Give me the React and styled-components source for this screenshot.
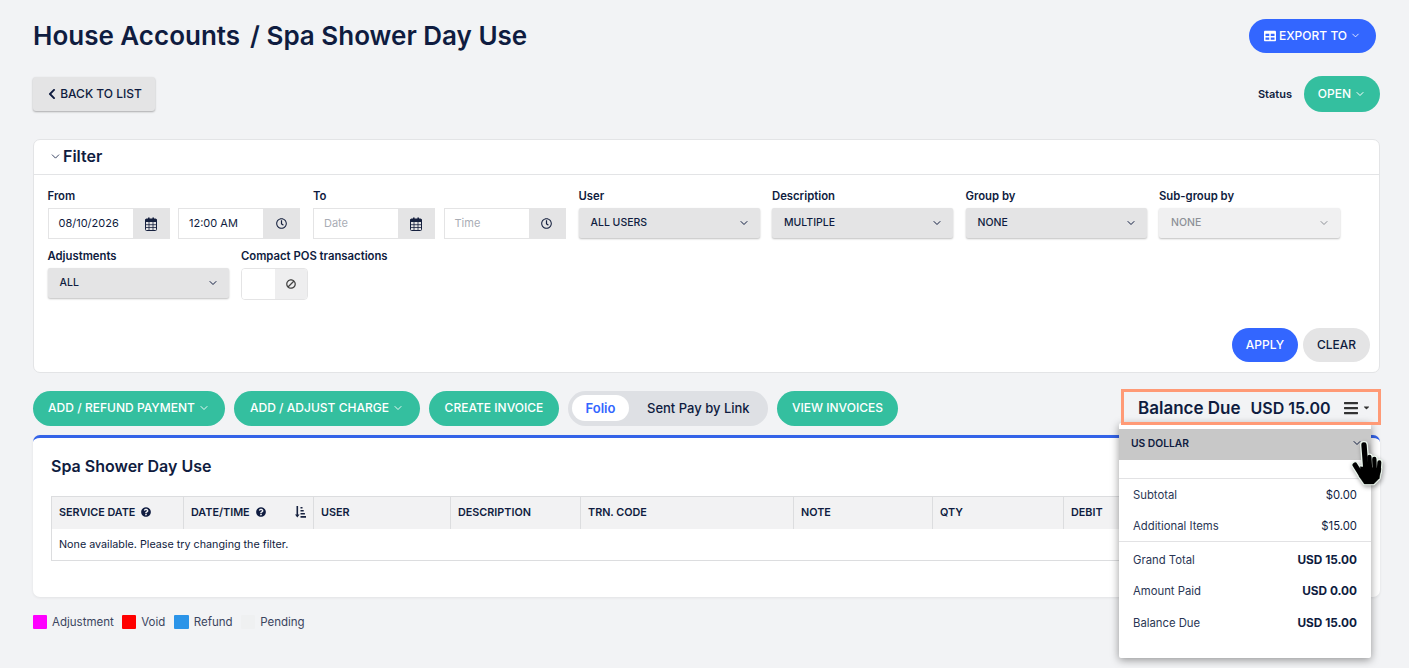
import styled, { createGlobalStyle } from "styled-components";
import { ChevronDown } from "lucide-react";
import {
  FaBan,
  FaBars,
  FaCaretDown,
  FaChevronLeft,
  FaQuestionCircle,
  FaRegClock,
  FaTable,
} from "react-icons/fa";

const navy = "#0f1c40";
const green = "#34bf9f";
const blue = "#3366ff";

const GlobalStyle = createGlobalStyle`
  html, body {
    margin: 0;
    height: 100%;
    background: #f2f3f5;
    overflow: hidden;
  }
  * { box-sizing: border-box; }
  body {
    font-family: "Inter", "Noto Sans", sans-serif;
    color: ${navy};
  }
`;

const Page = styled.div`
  height: 668px;
  padding: 19px 29px 0 33px;
  position: relative;
`;

const HeaderRow = styled.div`
  display: flex;
  justify-content: space-between;
  align-items: center;
  padding-right: 4px;
  height: 34px;
`;

const Title = styled.h1`
  margin: -2px 0 0;
  font-size: 26px;
  font-weight: 600;
  display: flex;
  gap: 10px;
`;

const Pill = styled.button`
  display: inline-flex;
  align-items: center;
  justify-content: center;
  gap: ${(p) => p.$gap ?? 3}px;
  height: ${(p) => p.$height ?? 35}px;
  width: ${(p) => (p.$width ? `${p.$width}px` : "auto")};
  padding: 0 0 ${(p) => p.$lift ?? 1}px;
  border: none;
  border-radius: 18px;
  background: ${(p) => p.$bg ?? green};
  color: ${(p) => p.$color ?? "#fff"};
  font: 500 12px "Inter", sans-serif;
  letter-spacing: 0.02px;
  flex-shrink: 0;
`;

const BackRow = styled.div`
  display: flex;
  justify-content: space-between;
  align-items: center;
  margin-top: 23px;
  height: 36px;
`;

const BackButton = styled.button`
  display: inline-flex;
  align-items: center;
  justify-content: center;
  gap: 2px;
  width: 122px;
  height: 34px;
  padding: 0 0 1px;
  border: none;
  border-radius: 3px;
  background: #e4e4e5;
  box-shadow: 0 1px 2px rgba(0, 0, 0, 0.3);
  color: ${navy};
  font: 500 12px "Inter", sans-serif;
`;

const StatusGroup = styled.div`
  display: flex;
  align-items: center;
  gap: 12px;
`;

const StatusLabel = styled.span`
  font-size: 11px;
  font-weight: 600;
`;

const FilterCard = styled.section`
  margin-top: 27px;
  height: 234px;
  background: #fff;
  border: 1px solid #e3e4e6;
  border-radius: 7px;
  display: flex;
  flex-direction: column;
`;

const FilterHead = styled.div`
  height: 35px;
  flex-shrink: 0;
  border-bottom: 1px solid #e3e4e6;
  display: flex;
  align-items: center;
  gap: 1px;
  padding: 0 0 2px 15px;
  font-size: 16px;
  font-weight: 600;
`;

const FilterBody = styled.div`
  flex: 1;
  padding: 14px 9px 10px 13.5px;
  display: flex;
  flex-direction: column;
`;

const FieldRow = styled.div`
  display: flex;
  height: 60px;
`;

const Field = styled.div`
  width: ${(p) => p.$width}px;
  flex-shrink: 0;
`;

const Label = styled.div`
  font-size: 11.3px;
  font-weight: 600;
  line-height: 14px;
  margin-bottom: 5px;
`;

const InputPair = styled.div`
  display: flex;
  gap: 8.5px;
`;

const InputGroup = styled.div`
  width: 122px;
  height: 31px;
  display: flex;
  border: 1px solid #e4e4e5;
  background: #fff;
`;

const InputText = styled.span`
  flex: 1;
  font-size: 11px;
  line-height: 29px;
  padding-left: 10px;
  color: ${(p) => (p.$placeholder ? "#a9adb5" : navy)};
`;

const Addon = styled.span`
  width: 36px;
  background: #e4e4e5;
  display: flex;
  align-items: center;
  justify-content: center;
  color: #16213f;
`;

const Select = styled.div`
  width: 181px;
  height: 30px;
  background: ${(p) => (p.$disabled ? "#f0f0f1" : "#e4e4e5")};
  color: ${(p) => (p.$disabled ? "#8d9097" : navy)};
  border-radius: 2px;
  box-shadow: 0 1px 2px rgba(0, 0, 0, 0.25);
  display: flex;
  align-items: center;
  justify-content: space-between;
  padding: 0 10px 1px 12px;
  font-size: 10.5px;
  font-weight: 500;
`;

const ToggleGroup = styled.div`
  width: 67px;
  height: 32px;
  border: 1px solid #e4e4e5;
  border-radius: 4px;
  display: flex;
  overflow: hidden;
`;

const ToggleBlank = styled.span`
  width: 33px;
  background: #fff;
`;

const ToggleIcon = styled.span`
  flex: 1;
  background: #eeeeef;
  display: flex;
  align-items: center;
  justify-content: center;
  font-size: 10px;
  color: #444;
`;

const MirroredBan = styled(FaBan)`
  transform: scaleX(-1);
`;

const FilterActions = styled.div`
  margin-top: auto;
  display: flex;
  justify-content: flex-end;
  gap: 5px;
`;

const ActionRow = styled.div`
  margin-top: 18px;
  height: 35px;
  display: flex;
  align-items: center;
  gap: 9px;
  position: relative;
`;

const TabSwitch = styled.div`
  width: 200px;
  height: 35px;
  background: #dee0e4;
  border-radius: 18px;
  display: flex;
  align-items: center;
  padding: 0 0 1px 4px;
  font-size: 13px;
  font-weight: 500;
`;

const ActiveTab = styled.span`
  width: 57px;
  height: 26px;
  border-radius: 13px;
  background: #fff;
  color: ${blue};
  display: flex;
  align-items: center;
  justify-content: center;
  padding-bottom: 1px;
  font-weight: 600;
  margin-right: 18px;
`;

const BalanceBox = styled.div`
  position: absolute;
  right: -1px;
  top: -2px;
  width: 260px;
  height: 36px;
  border: 3px solid #ff9a76;
  display: flex;
  align-items: center;
  padding: 1px 0 0 14px;
  font-size: 17px;
  font-weight: 600;
  z-index: 2;
`;

const BalanceAmount = styled.span`
  margin-left: 10px;
  font-size: 16px;
`;

const BalanceMenu = styled.span`
  margin-left: auto;
  margin-right: 7px;
  display: flex;
  align-items: center;
  font-size: 16px;
  color: #333;
`;

const Caret = styled(FaCaretDown)`
  font-size: 9px;
  margin-left: 3px;
`;

const FolioCard = styled.section`
  margin-top: 9px;
  height: 162px;
  background: #fff;
  border-top: 3px solid #3463e8;
  border-radius: 7px;
  box-shadow: 0 1px 3px rgba(0, 0, 0, 0.07);
  padding: 18px 18px 0;
`;

const FolioTitle = styled.h2`
  margin: 0 0 19px;
  font-size: 16px;
  font-weight: 600;
  line-height: 21px;
`;

const Table = styled.div`
  border: 1px solid #dcdddf;
  height: 65px;
`;

const HeadRow = styled.div`
  display: grid;
  grid-template-columns: 131px 130px 137px 130px 213px 139px 131px 1fr;
  height: 32px;
  background: #f2f2f3;
`;

const HeadCell = styled.div`
  display: flex;
  align-items: center;
  gap: 6px;
  padding: 0 0 2px 7px;
  font-size: 10.8px;
  font-weight: 600;
  border-left: ${(p) => (p.$first ? "none" : "1px solid #dcdddf")};
`;

const SortIcon = styled.svg`
  margin-left: auto;
  margin-right: 7px;
`;

const EmptyRow = styled.div`
  padding-left: 7px;
  line-height: 31px;
  font-size: 10.75px;
`;

const Legend = styled.div`
  margin-top: 18px;
  display: flex;
  align-items: center;
  font-size: 11.5px;
  color: #3b4560;
`;

const Swatch = styled.span`
  width: ${(p) => p.$size ?? 14}px;
  height: 14px;
  border-radius: 1px;
  background: ${(p) => p.$color};
  margin-right: 5px;
`;

const LegendText = styled.span`
  margin-right: 8.5px;
`;

const BalancePanel = styled.aside`
  position: absolute;
  left: 1119px;
  top: 423px;
  width: 252px;
  height: 235px;
  background: #fff;
  box-shadow: 0 2px 8px rgba(0, 0, 0, 0.4);
  border-radius: 2px;
  padding-top: 6px;
  z-index: 1;
`;

const CurrencySelect = styled.div`
  height: 31px;
  background: #c8c8c8;
  display: flex;
  align-items: center;
  justify-content: space-between;
  padding: 0 8px 3px 12px;
  font-size: 10.3px;
  font-weight: 600;
`;

const PanelGroup = styled.div`
  border-top: 1px solid #e2e2e4;
  margin-top: ${(p) => p.$top ?? 0}px;
  padding: ${(p) => p.$pad}px 14px 0;
`;

const PanelRow = styled.div`
  display: flex;
  justify-content: space-between;
  align-items: center;
  height: ${(p) => p.$height}px;
  font-size: 11.3px;
  color: #2a3654;
`;

const PanelValue = styled.span`
  font-size: ${(p) => (p.$bold ? 11.8 : 11.3)}px;
  font-weight: ${(p) => (p.$bold ? 700 : 400)};
  color: ${navy};
`;

const PointerSvg = styled.svg`
  position: absolute;
  left: 1345px;
  top: 435px;
  z-index: 3;
  filter: drop-shadow(1px 2px 2px rgba(0, 0, 0, 0.35));
`;

const dateFields = [
  { label: "From", date: "08/10/2026", time: "12:00 AM", width: 265.5 },
  { label: "To", date: "Date", time: "Time", width: 265.5, empty: true },
];

const selects = [
  { label: "Description", value: "MULTIPLE" },
  { label: "Group by", value: "NONE" },
  { label: "Sub-group by", value: "NONE", disabled: true },
];

const columns = ["USER", "DESCRIPTION", "TRN. CODE", "NOTE", "QTY", "DEBIT"];

const Chevron = ({ size = 12, width = 2 }) => (
  <ChevronDown size={size} strokeWidth={width} />
);

const CalendarIcon = () => (
  <svg width="12" height="14" viewBox="0 0 12 14" fill="none">
    <path d="M3 0.5h1.6v3H3zM7.4 0.5H9v3H7.4z" fill="#16213f" />
    <rect x="0.5" y="2" width="11" height="11.5" rx="1" stroke="#16213f" />
    <rect x="0.5" y="2" width="11" height="3" fill="#16213f" />
    <path
      d="M4 5v8M8 5v8M0.5 7.7h11M0.5 10.5h11"
      stroke="#16213f"
      strokeWidth="0.8"
    />
  </svg>
);

const SortAmountIcon = () => (
  <SortIcon width="11" height="12" viewBox="0 0 11 12" fill="#16213f">
    <path d="M1.5 0h1.6v8.6h1.5L2.3 11.4 0 8.6h1.5z" />
    <path d="M5.5 1h2v1.6h-2zM5.5 4h3.2v1.6H5.5zM5.5 7h4.4v1.6H5.5zM5.5 10H11v1.8H5.5z" />
  </SortIcon>
);

const fingers = [
  { d: "M57 30L62 95", w: 16 },
  { d: "M73 66L75 100", w: 13 },
  { d: "M88 72L89 105", w: 13 },
  { d: "M103 82L101 110", w: 12 },
  { d: "M30 90L50 122", w: 15 },
];
const palm = "M46 95L108 100L103 130L86 147L58 147L43 125Z";

const Pointer = () => (
  <PointerSvg width="45" height="55" viewBox="0 0 135 165" strokeLinecap="round">
    <g stroke="#eaf6ec" fill="#eaf6ec" strokeLinejoin="round">
      {fingers.map((f) => (
        <path key={f.d} d={f.d} strokeWidth={f.w + 8} />
      ))}
      <path d={palm} strokeWidth="8" />
    </g>
    <g stroke="#000" fill="#000" strokeLinejoin="round">
      {fingers.map((f) => (
        <path key={f.d} d={f.d} strokeWidth={f.w} />
      ))}
      <path d={palm} strokeWidth="1" />
    </g>
  </PointerSvg>
);

const App = () => (
  <Page>
    <GlobalStyle />
    <HeaderRow>
      <Title>
        <span>House Accounts</span>
        <span>/ Spa Shower Day Use</span>
      </Title>
      <Pill $bg={blue} $width={127} $height={34}>
        <FaTable size={12} />
        EXPORT TO
        <Chevron size={11} width={1.8} />
      </Pill>
    </HeaderRow>

    <BackRow>
      <BackButton>
        <FaChevronLeft size={12} />
        BACK TO LIST
      </BackButton>
      <StatusGroup>
        <StatusLabel>Status</StatusLabel>
        <Pill $width={76} $height={36}>
          OPEN
          <Chevron />
        </Pill>
      </StatusGroup>
    </BackRow>

    <FilterCard>
      <FilterHead>
        <Chevron size={13} width={1.5} />
        Filter
      </FilterHead>
      <FilterBody>
        <FieldRow>
          {dateFields.map((field) => (
            <Field key={field.label} $width={field.width}>
              <Label>{field.label}</Label>
              <InputPair>
                <InputGroup>
                  <InputText $placeholder={field.empty}>{field.date}</InputText>
                  <Addon>
                    <CalendarIcon />
                  </Addon>
                </InputGroup>
                <InputGroup>
                  <InputText $placeholder={field.empty}>{field.time}</InputText>
                  <Addon>
                    <FaRegClock size={11} />
                  </Addon>
                </InputGroup>
              </InputPair>
            </Field>
          ))}
          <Field $width={193.5}>
            <Label>User</Label>
            <Select>
              ALL USERS
              <Chevron />
            </Select>
          </Field>
          {selects.map((item) => (
            <Field key={item.label} $width={193.5}>
              <Label>{item.label}</Label>
              <Select $disabled={item.disabled}>
                {item.value}
                <Chevron />
              </Select>
            </Field>
          ))}
        </FieldRow>
        <FieldRow>
          <Field $width={193.5}>
            <Label>Adjustments</Label>
            <Select>
              ALL
              <Chevron />
            </Select>
          </Field>
          <Field $width={200}>
            <Label>Compact POS transactions</Label>
            <ToggleGroup>
              <ToggleBlank />
              <ToggleIcon>
                <MirroredBan />
              </ToggleIcon>
            </ToggleGroup>
          </Field>
        </FieldRow>
        <FilterActions>
          <Pill $bg={blue} $width={66} $height={34}>
            APPLY
          </Pill>
          <Pill $bg="#e4e4e5" $color={navy} $width={67} $height={34}>
            CLEAR
          </Pill>
        </FilterActions>
      </FilterBody>
    </FilterCard>

    <ActionRow>
      <Pill $width={192} $lift={2}>
        ADD / REFUND PAYMENT
        <Chevron size={12} width={1.8} />
      </Pill>
      <Pill $width={186} $lift={2}>
        ADD / ADJUST CHARGE
        <Chevron size={12} width={1.8} />
      </Pill>
      <Pill $width={130} $lift={2}>
        CREATE INVOICE
      </Pill>
      <TabSwitch>
        <ActiveTab>Folio</ActiveTab>
        Sent Pay by Link
      </TabSwitch>
      <Pill $width={121} $lift={2}>
        VIEW INVOICES
      </Pill>
      <BalanceBox>
        Balance Due
        <BalanceAmount>USD 15.00</BalanceAmount>
        <BalanceMenu>
          <FaBars />
          <Caret />
        </BalanceMenu>
      </BalanceBox>
    </ActionRow>

    <FolioCard>
      <FolioTitle>Spa Shower Day Use</FolioTitle>
      <Table>
        <HeadRow>
          <HeadCell $first>
            SERVICE DATE
            <FaQuestionCircle size={10} />
          </HeadCell>
          <HeadCell>
            DATE/TIME
            <FaQuestionCircle size={10} />
            <SortAmountIcon />
          </HeadCell>
          {columns.map((column) => (
            <HeadCell key={column}>{column}</HeadCell>
          ))}
        </HeadRow>
        <EmptyRow>None available. Please try changing the filter.</EmptyRow>
      </Table>
    </FolioCard>

    <Legend>
      <Swatch $color="#ff00ff" />
      <LegendText>Adjustment</LegendText>
      <Swatch $color="#ff0000" />
      <LegendText>Void</LegendText>
      <Swatch $color="#2b94e8" $size={15} />
      <LegendText>Refund</LegendText>
      <Swatch $color="#eff0f1" />
      <LegendText>Pending</LegendText>
    </Legend>

    <BalancePanel>
      <CurrencySelect>
        US DOLLAR
        <Chevron />
      </CurrencySelect>
      <PanelGroup $top={18} $pad={1}>
        <PanelRow $height={30.5}>
          Subtotal
          <PanelValue>$0.00</PanelValue>
        </PanelRow>
        <PanelRow $height={30.5}>
          Additional Items
          <PanelValue>$15.00</PanelValue>
        </PanelRow>
      </PanelGroup>
      <PanelGroup $pad={2}>
        <PanelRow $height={31.5}>
          Grand Total
          <PanelValue $bold>USD 15.00</PanelValue>
        </PanelRow>
        <PanelRow $height={31.5}>
          Amount Paid
          <PanelValue $bold>USD 0.00</PanelValue>
        </PanelRow>
        <PanelRow $height={31.5}>
          Balance Due
          <PanelValue $bold>USD 15.00</PanelValue>
        </PanelRow>
      </PanelGroup>
    </BalancePanel>
    <Pointer />
  </Page>
);

export default App;
